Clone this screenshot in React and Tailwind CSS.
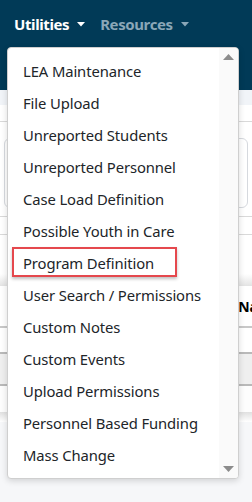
import React from 'react';

const items = [
  'LEA Maintenance',
  'File Upload',
  'Unreported Students',
  'Unreported Personnel',
  'Case Load Definition',
  'Possible Youth in Care',
  'Program Definition',
  'User Search / Permissions',
  'Custom Notes',
  'Custom Events',
  'Upload Permissions',
  'Personnel Based Funding',
  'Mass Change',
];

const Caret = ({ className }) => (
  <svg width="8" height="5" viewBox="0 0 8 5" className={className}>
    <path d="M0 0 L8 0 L4 4.5 Z" fill="currentColor" />
  </svg>
);

const App = () => {
  return (
    <div className="relative w-[252px] h-[502px] overflow-hidden bg-[#f6f7f9] font-['Segoe_UI','Noto_Sans',sans-serif]">
      {/* Top nav */}
      <div className="h-[90px] bg-[#013a57] flex items-start pt-[13px] pl-[14px] gap-[15px]">
        <div className="flex items-center gap-[8px] text-white font-bold text-[15px] tracking-[-0.4px]">
          Utilities <Caret className="text-white" />
        </div>
        <div className="flex items-center gap-[8px] text-[#8aa7b8] font-bold text-[15px] tracking-[-0.4px]">
          Resources <Caret className="text-[#8aa7b8]" />
        </div>
      </div>

      {/* Page content behind menu */}
      <div className="h-[15px] bg-[#f1f4f8]" />
      <div className="h-[17px] bg-white border-b border-[#d9d9d9]" />
      <div className="bg-white pt-[16px] pb-[8px] px-[4px]">
        <div className="h-[70px] border border-[#d6d9de] rounded-[6px] bg-white" />
      </div>
      <div className="h-[18px] bg-white border-t border-[#d9d9d9]" />
      <div className="h-[40px] bg-white border-t border-[#d9d9d9]" />
      <div className="h-[12px] bg-gradient-to-b from-white to-[#e3e3e3]" />
      <div className="bg-white h-[40px] flex items-center justify-end text-[14px] font-bold text-black">
        <span className="-mr-[6px]">Na</span>
      </div>
      <div className="h-[26px] bg-white border-t-2 border-[#c8c8c8]" />
      <div className="h-[34px] bg-[#efefef] border-t-2 border-b-2 border-[#b9b9b9]" />
      <div className="h-[26px] bg-[#fdfdfd]" />
      <div className="h-[10px] bg-gradient-to-b from-[#e0e0e0] to-white" />

      {/* Dropdown menu */}
      <div className="absolute left-[7px] top-[47px] w-[232px] h-[432px] bg-white border border-[#cfcfcf] rounded-[4px] shadow-[0_2px_6px_rgba(0,0,0,0.15)] overflow-hidden">
        <div className="absolute right-0 top-0 bottom-0 w-[19px] bg-[#fafafa] flex flex-col items-center justify-between py-[6px]">
          <svg width="11" height="6" viewBox="0 0 11 6">
            <path d="M5.5 0 L11 6 L0 6 Z" fill="#8c8c8c" />
          </svg>
          <svg width="11" height="6" viewBox="0 0 11 6">
            <path d="M0 0 L11 0 L5.5 6 Z" fill="#8c8c8c" />
          </svg>
        </div>
        <ul className="pt-[7px]">
          {items.map((item) => (
            <li
              key={item}
              className="relative h-[32px] flex items-center pl-[15px] text-[14.8px] tracking-[-0.1px] text-[#212529]"
            >
              {item === 'Program Definition' && (
                <span className="absolute left-[4px] top-[0px] w-[165px] h-[30px] border-2 border-[#e5484d] shadow-[0_2px_3px_rgba(0,0,0,0.25)]" />
              )}
              <span className="relative">{item}</span>
            </li>
          ))}
        </ul>
      </div>
    </div>
  );
};

export default App;
